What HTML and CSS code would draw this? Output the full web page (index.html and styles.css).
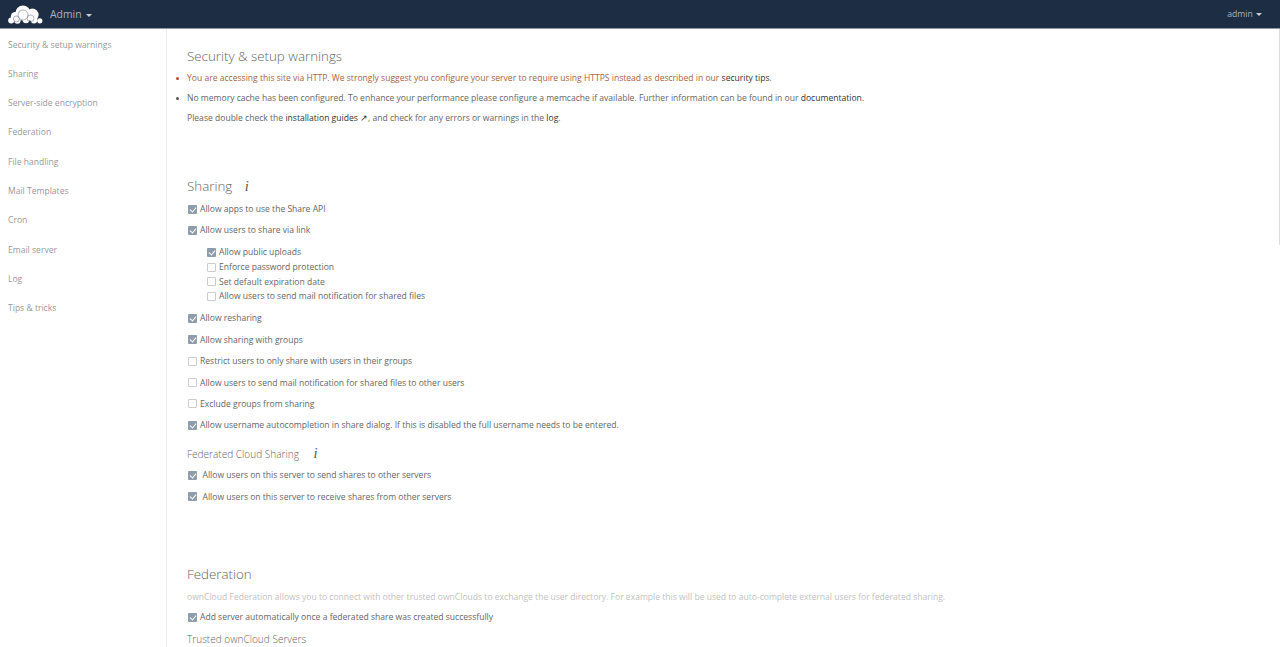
FILE: index.html
```html
<!DOCTYPE html>
<html lang="en">
<head>
    <meta charset="UTF-8">
    <title>Admin - ownCloud</title>
    <link rel="stylesheet" href="styles.css">
</head>
<body>
    <header class="topbar">
        <svg class="logo" viewBox="0 0 35 19" width="35" height="19">
            <g fill="#fff">
                <circle cx="15" cy="8" r="7.6"/>
                <circle cx="7.4" cy="11.5" r="4.6"/>
                <circle cx="24.4" cy="9.8" r="6.2"/>
                <circle cx="3.2" cy="15.4" r="3"/>
                <circle cx="9.4" cy="15.6" r="3.2"/>
                <circle cx="18" cy="14.6" r="3.6"/>
                <circle cx="26" cy="15" r="3.4"/>
                <circle cx="31.8" cy="15.8" r="2.6"/>
            </g>
            <g fill="none" stroke="#1d2d44" stroke-width="0.5" opacity="0.7">
                <circle cx="15" cy="10" r="5"/>
                <circle cx="8.4" cy="14" r="3"/>
                <circle cx="22.6" cy="13.4" r="3.4"/>
            </g>
        </svg>
        <div class="app-menu">Admin <span class="caret"></span></div>
        <div class="user-menu">admin <span class="caret small"></span></div>
    </header>

    <div class="layout">
        <nav class="sidebar">
            <a>Security &amp; setup warnings</a>
            <a>Sharing</a>
            <a>Server-side encryption</a>
            <a>Federation</a>
            <a>File handling</a>
            <a>Mail Templates</a>
            <a>Cron</a>
            <a>Email server</a>
            <a>Log</a>
            <a>Tips &amp; tricks</a>
        </nav>

        <main class="content">
            <section class="security">
                <h2>Security &amp; setup warnings</h2>
                <ul class="warnings">
                    <li class="warn">You are accessing this site via HTTP. We strongly suggest you configure your server to require using HTTPS instead as described in our <a>security tips</a>.</li>
                    <li>No memory cache has been configured. To enhance your performance please configure a memcache if available. Further information can be found in our <a>documentation</a>.</li>
                </ul>
                <p class="hint">Please double check the <a>installation guides ↗</a>, and check for any errors or warnings in the <a>log</a>.</p>
            </section>

            <section class="sharing">
                <h2>Sharing <span class="info">i</span></h2>
                <label class="row"><span class="box on"></span>Allow apps to use the Share API</label>
                <label class="row"><span class="box on"></span>Allow users to share via link</label>
                <div class="sub">
                    <label class="subrow"><span class="box on"></span>Allow public uploads</label>
                    <label class="subrow"><span class="box"></span>Enforce password protection</label>
                    <label class="subrow"><span class="box"></span>Set default expiration date</label>
                    <label class="subrow"><span class="box"></span>Allow users to send mail notification for shared files</label>
                </div>
                <label class="row"><span class="box on"></span>Allow resharing</label>
                <label class="row"><span class="box on"></span>Allow sharing with groups</label>
                <label class="row"><span class="box"></span>Restrict users to only share with users in their groups</label>
                <label class="row"><span class="box"></span>Allow users to send mail notification for shared files to other users</label>
                <label class="row"><span class="box"></span>Exclude groups from sharing</label>
                <label class="row"><span class="box on"></span>Allow username autocompletion in share dialog. If this is disabled the full username needs to be entered.</label>
                <h3>Federated Cloud Sharing <span class="info">i</span></h3>
                <label class="row wide"><span class="box on"></span>Allow users on this server to send shares to other servers</label>
                <label class="row wide"><span class="box on"></span>Allow users on this server to receive shares from other servers</label>
            </section>

            <section class="federation">
                <h2>Federation</h2>
                <p class="desc">ownCloud Federation allows you to connect with other trusted ownClouds to exchange the user directory. For example this will be used to auto-complete external users for federated sharing.</p>
                <label class="row"><span class="box on"></span>Add server automatically once a federated share was created successfully</label>
                <h3>Trusted ownCloud Servers</h3>
            </section>
        </main>
        <div class="scroll-thumb"></div>
    </div>
</body>
</html>
```

FILE: styles.css
```css
* {
    box-sizing: border-box;
}

html, body {
    height: 100%;
    margin: 0;
    overflow: hidden;
}

body {
    font-family: "Open Sans", sans-serif;
    font-size: 8.57px;
    color: #666;
    background: #fff;
}

.topbar {
    display: flex;
    align-items: center;
    height: 29px;
    background: #1d2d44;
    border-bottom: 1px solid #8f99a6;
    color: #a9b2bf;
}

.logo {
    flex: none;
    margin-left: 8px;
}

.app-menu {
    margin-left: 7px;
    font-size: 10.4px;
}

.user-menu {
    margin-left: auto;
    margin-right: 18px;
    font-size: 8.67px;
}

.caret {
    display: inline-block;
    margin-left: 2px;
    vertical-align: middle;
    border-left: 3px solid transparent;
    border-right: 3px solid transparent;
    border-top: 3px solid #c8ced8;
}

.caret.small {
    margin-left: 1px;
}

.layout {
    position: relative;
    display: flex;
    height: calc(100% - 29px);
}

.scroll-thumb {
    position: absolute;
    top: 0;
    right: 0;
    width: 1px;
    height: 216px;
    background: #ddd;
}

.sidebar {
    display: flex;
    flex-direction: column;
    flex: none;
    width: 167px;
    padding-top: 1.5px;
    border-right: 1px solid #eee;
}

.sidebar a {
    height: 29.33px;
    line-height: 29.33px;
    padding-left: 8px;
    color: #999;
}

.content {
    flex: 1;
    padding-left: 20px;
    overflow: hidden;
}

section {
    line-height: 1.4;
}

h2 {
    margin: 0;
    font-size: 13.33px;
    font-weight: 300;
    color: #666;
}

h3 {
    margin: 0;
    font-size: 10.07px;
    font-weight: 300;
    color: #666;
}

.info {
    display: inline-block;
    margin-left: 9px;
    font-family: "Liberation Serif", serif;
    font-style: italic;
    font-size: 14.5px;
    line-height: 1;
    color: #555;
}

h3 .info {
    margin-left: 12px;
}

.security {
    padding-top: 18px;
}

.warnings {
    margin: 6px 0 0;
    padding: 0;
    list-style: none;
}

.warnings li {
    position: relative;
    margin-bottom: 8px;
    line-height: 12px;
}

.warnings li::before {
    content: "";
    position: absolute;
    left: -11px;
    top: 5px;
    width: 3px;
    height: 3px;
    border-radius: 50%;
    background: #555;
}

.warnings li.warn {
    color: #a8643f;
}

.warnings li.warn::before {
    background: #b9492f;
}

.warnings a, .hint a {
    color: #333;
}

.hint {
    margin: 0;
    line-height: 12px;
}

.sharing {
    padding-top: 53px;
}

.row {
    display: flex;
    align-items: center;
    height: 21.4px;
}

.sharing h2 + .row {
    margin-top: 3px;
}

.subrow {
    display: flex;
    align-items: center;
    height: 14.67px;
}

.sub {
    padding: 4px 0 4px 19px;
}

.box {
    flex: none;
    width: 9px;
    height: 9px;
    margin-left: 1px;
    margin-right: 3px;
    border: 1px solid #ccc;
    border-radius: 1px;
    background: #fff;
}

.box.on {
    border: 0;
    background: #8f9cab;
    position: relative;
}

.box.on::after {
    content: "";
    position: absolute;
    left: 3px;
    top: 1px;
    width: 3px;
    height: 5px;
    border-right: 1.2px solid #fff;
    border-bottom: 1.2px solid #fff;
    transform: rotate(40deg);
}

.row.wide .box {
    margin-right: 5.5px;
}

.sharing h3 {
    margin-top: 10px;
    margin-bottom: 3.5px;
}

.federation {
    padding-top: 57.5px;
}

.desc {
    margin: 7px 0 4px;
    color: #c2c2c2;
}

.federation h3 {
    margin-top: 4px;
}
```
